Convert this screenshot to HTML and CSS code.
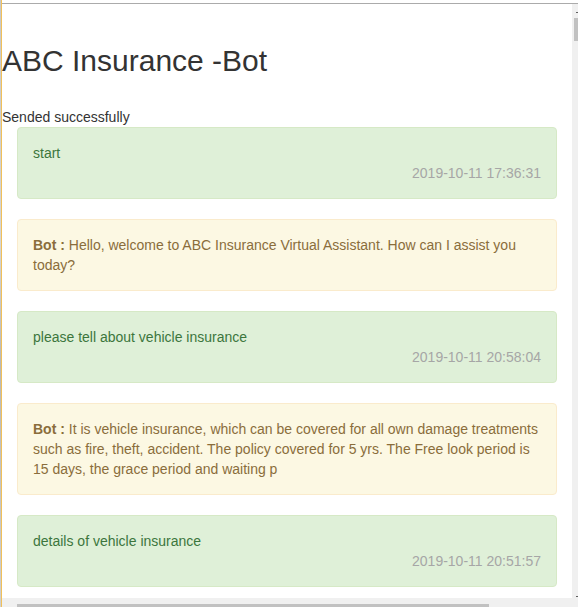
FILE: index.html
```html
<!DOCTYPE html>
<html>
<head>
<meta charset="utf-8">
<title>ABC Insurance -Bot</title>
<link rel="stylesheet" href="styles.css">
</head>
<body>
<div class="frame">
  <div class="edge"></div>
  <div class="window">
    <div class="viewport">
      <div class="content">
        <h2 class="title">ABC Insurance -Bot</h2>
        <div class="status">Sended successfully</div>
        <div class="messages">
          <div class="alert alert-user">
            <div>start</div>
            <div class="time">2019-10-11 17:36:31</div>
          </div>
          <div class="alert alert-bot">
            <div><b class="who">Bot : </b>Hello, welcome to ABC Insurance Virtual Assistant. How can I assist you today?</div>
          </div>
          <div class="alert alert-user">
            <div>please tell about vehicle insurance</div>
            <div class="time">2019-10-11 20:58:04</div>
          </div>
          <div class="alert alert-bot">
            <div><b class="who">Bot : </b>It is vehicle insurance, which can be covered for all own damage treatments such as fire, theft, accident. The policy covered for 5 yrs. The Free look period is 15 days, the grace period and waiting p</div>
          </div>
          <div class="alert alert-user">
            <div>details of vehicle insurance</div>
            <div class="time">2019-10-11 20:51:57</div>
          </div>
        </div>
      </div>
      <div class="hscroll"><div class="hthumb"></div></div>
    </div>
    <div class="vscroll">
      <div class="vmark"></div>
      <div class="vthumb"></div>
      <div class="vspacer"></div>
      <div class="vmark"></div>
    </div>
  </div>
</div>
</body>
</html>
```

FILE: styles.css
```css
html, body {
  margin: 0;
  padding: 0;
  background: #fff;
}

body {
  font-family: "Liberation Sans", Arial, sans-serif;
  font-size: 14px;
  line-height: 20px;
  color: #333;
  width: 578px;
  height: 607px;
  overflow: hidden;
}

.frame {
  display: flex;
  height: 607px;
}

.edge {
  width: 1px;
  border-right: 1px solid #f0c05a;
  background: linear-gradient(#c8c8c8 0, #d6d6d6 40%, #b9b9b9 60%, #d0d0d0 100%);
  flex: none;
}

.window {
  flex: 1;
  display: flex;
  margin-top: 3px;
  border-top: 1px solid #ababab;
  min-width: 0;
}

.viewport {
  flex: 1;
  display: flex;
  flex-direction: column;
  min-width: 0;
}

.content {
  flex: 1;
  overflow: hidden;
}

.title {
  margin: 40px 0 30px;
  font-size: 30px;
  line-height: 33px;
  font-weight: normal;
  color: #333;
}

.status {
  line-height: 20px;
}

.messages {
  padding: 0 15px;
}

.alert {
  padding: 15px;
  margin-bottom: 20px;
  border: 1px solid transparent;
  border-radius: 4px;
}

.alert-user {
  background: #dff0d8;
  border-color: #d6e9c6;
  color: #3c763d;
}

.alert-bot {
  background: #fcf8e3;
  border-color: #faebcc;
  color: #8a6d3b;
}

.who {
  font-weight: bold;
}

.time {
  text-align: right;
  color: #a6a6a6;
}

.hscroll {
  height: 9px;
  background: #f0f0f0;
  display: flex;
  align-items: flex-end;
  padding-left: 15px;
  flex: none;
}

.hthumb {
  width: 472px;
  height: 3px;
  background: #c1c1c1;
}

.vscroll {
  width: 6px;
  flex: none;
  background: #f0f0f0;
  display: flex;
  flex-direction: column;
  align-items: flex-end;
}

.vmark {
  width: 2px;
  height: 1px;
  background: #606060;
  margin: 8px 0 0;
}

.vthumb {
  width: 4px;
  height: 23px;
  margin-top: 5px;
  background: #c1c1c1;
}

.vspacer {
  flex: 1;
}

.vscroll .vmark:last-child {
  margin: 0 0 10px;
}
```
